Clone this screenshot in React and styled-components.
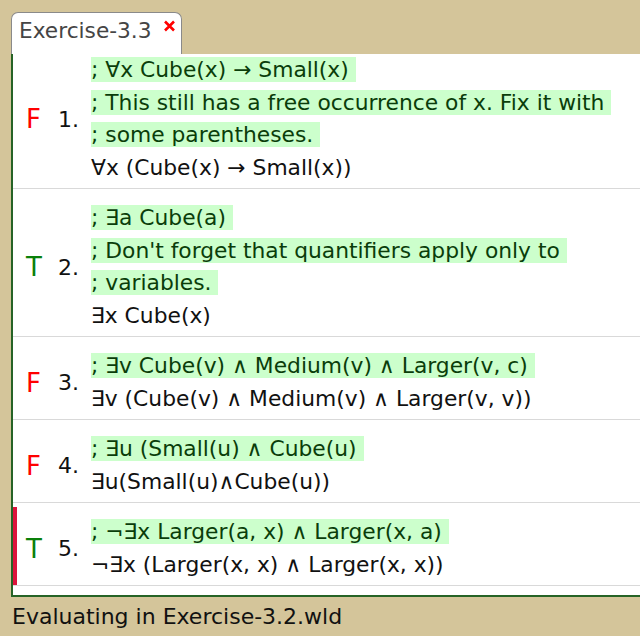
import styled, { createGlobalStyle } from 'styled-components';

const GlobalStyle = createGlobalStyle`
    body {
        margin: 0;
        background: #d4c59a;
        font-family: 'DejaVu Sans', 'Liberation Sans', sans-serif;
    }
`;

const sentences = [
    {
        value: 'F',
        comments: [
            '; ∀x Cube(x) → Small(x) ',
            '; This still has a free occurrence of x. Fix it with ',
            '; some parentheses. ',
        ],
        formula: '∀x (Cube(x) → Small(x))',
    },
    {
        value: 'T',
        comments: [
            '; ∃a Cube(a) ',
            "; Don't forget that quantifiers apply only to ",
            '; variables. ',
        ],
        formula: '∃x Cube(x)',
    },
    {
        value: 'F',
        comments: ['; ∃v Cube(v) ∧ Medium(v) ∧ Larger(v, c) '],
        formula: '∃v (Cube(v) ∧ Medium(v) ∧ Larger(v, v))',
    },
    {
        value: 'F',
        comments: ['; ∃u (Small(u) ∧ Cube(u) '],
        formula: '∃u(Small(u)∧Cube(u))',
    },
    {
        value: 'T',
        selected: true,
        comments: ['; ¬∃x Larger(a, x) ∧ Larger(x, a) '],
        formula: '¬∃x (Larger(x, x) ∧ Larger(x, x))',
    },
];

function App() {
    return (
        <Page>
            <GlobalStyle />
            <TabBar>
                <Tab>
                    <TabTitle>Exercise-3.3</TabTitle>
                    <CloseIcon viewBox="0 0 12 12">
                        <path d="M1.5 1.5 L10.5 10.5 M10.5 1.5 L1.5 10.5" />
                    </CloseIcon>
                </Tab>
            </TabBar>
            <Panel>
                {/* list is scrolled down a little, first sentence is cut off */}
                <List>
                    {sentences.map((s, i) => (
                        <Item key={i}>
                            <Row $selected={s.selected}>
                                <Verdict $value={s.value}>{s.value}</Verdict>
                                <Number>{i + 1}.</Number>
                                <Lines>
                                    {s.comments.map((c, j) => (
                                        <Line key={j}>
                                            <Comment>{c}</Comment>
                                        </Line>
                                    ))}
                                    <Line>{s.formula}</Line>
                                </Lines>
                            </Row>
                        </Item>
                    ))}
                </List>
            </Panel>
            <StatusBar>Evaluating in Exercise-3.2.wld</StatusBar>
        </Page>
    );
}

export default App;

const Page = styled.div`
    height: 636px;
    display: flex;
    flex-direction: column;
    padding-top: 12px;
    box-sizing: border-box;
    overflow: hidden;
`;

const TabBar = styled.div`
    display: flex;
    padding-left: 11px;
`;

const Tab = styled.div`
    height: 42px;
    box-sizing: border-box;
    display: flex;
    align-items: flex-start;
    padding: 2px 5px 0 7px;
    background: white;
    border: 1px solid #8a8a8a;
    border-bottom: none;
    border-radius: 7px 7px 0 0;
`;

const TabTitle = styled.span`
    font-size: 21.7px;
    line-height: 32.5px;
    color: #454545;
`;

const CloseIcon = styled.svg`
    width: 13px;
    height: 12px;
    margin: 5px 0 0 11px;
    fill: none;
    stroke: #ff0000;
    stroke-width: 2.6;
`;

const Panel = styled.div`
    height: 543px;
    box-sizing: border-box;
    margin-left: 11px;
    background: white;
    border-left: 2px solid #266326;
    border-bottom: 2px solid #266326;
    overflow: hidden;
`;

const List = styled.div`
    margin-top: -13px;
`;

const Item = styled.div`
    padding-top: 4px;
    border-bottom: 1px solid #d9d9d9;
`;

const Row = styled.div`
    display: flex;
    align-items: center;
    padding: 9px 0 4px 9px;
    border-left: 4px solid ${(p) => (p.$selected ? '#dc143c' : 'transparent')};
`;

const Verdict = styled.div`
    width: 32px;
    flex-shrink: 0;
    font-size: 26px;
    color: ${(p) => (p.$value === 'T' ? '#0a800a' : '#ff0000')};
`;

const Number = styled.div`
    width: 33px;
    flex-shrink: 0;
    font-size: 22px;
    color: #111;
`;

const Lines = styled.div`
    display: flex;
    flex-direction: column;
    font-size: 21.8px;
    line-height: 32.5px;
    color: #111;
`;

const Line = styled.div`
    white-space: pre;
`;

const Comment = styled.span`
    background: #ccffcc;
    color: #0a3d0a;
`;

const StatusBar = styled.div`
    flex: 1;
    display: flex;
    align-items: center;
    padding-left: 12px;
    font-size: 22px;
    color: #111;
`;
